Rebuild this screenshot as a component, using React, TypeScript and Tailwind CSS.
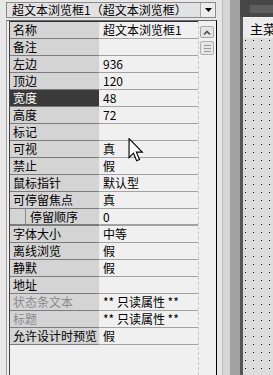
import React from 'react';

type Row = { n: string; v: string; gray?: boolean; sel?: boolean; sub?: boolean; thick?: boolean };

const rows: Row[] = [
  { n: '名称', v: '超文本浏览框1' },
  { n: '备注', v: '' },
  { n: '左边', v: '936' },
  { n: '顶边', v: '120' },
  { n: '宽度', v: '48', sel: true },
  { n: '高度', v: '72' },
  { n: '标记', v: '' },
  { n: '可视', v: '真' },
  { n: '禁止', v: '假' },
  { n: '鼠标指针', v: '默认型' },
  { n: '可停留焦点', v: '真' },
  { n: '停留顺序', v: '0', sub: true, thick: true },
  { n: '字体大小', v: '中等' },
  { n: '离线浏览', v: '假' },
  { n: '静默', v: '假' },
  { n: '地址', v: '' },
  { n: '状态条文本', v: '** 只读属性 **', gray: true },
  { n: '标题', v: '** 只读属性 **', gray: true },
  { n: '允许设计时预览', v: '假' },
];

function PropRow({ r }: { r: Row }) {
  const nameCls = r.sel
    ? 'bg-[#3a3a3a] text-white'
    : r.gray
    ? 'bg-[#d4d4d4] text-[#8a8a8a]'
    : 'bg-[#d4d4d4] text-black';
  const bb = r.thick ? 'border-b-2' : 'border-b';
  return (
    <div className="flex h-[17px]">
      <div
        className={`flex w-[90px] shrink-0 items-center whitespace-nowrap border-r border-r-[#ececec] ${bb} border-b-[#7c7c7c] ${nameCls} ${
          r.sub ? 'pl-[15px]' : 'pl-[3px]'
        }`}
      >
        {r.sub ? (
          <div className="flex h-full items-center border-l border-l-[#8a8a8a] pl-[4px]">{r.n}</div>
        ) : (
          r.n
        )}
      </div>
      <div className={`flex min-w-0 flex-1 items-center whitespace-nowrap ${bb} border-b-[#a2a2a2] bg-[#f0f0f0] pl-[3px]`}>{r.v}</div>
    </div>
  );
}

export default function App() {
  return (
    <div className="relative flex h-[375px] w-[273px] overflow-hidden bg-[#e8e8e8] font-['Noto_Sans_CJK_SC','Noto_Sans',sans-serif] text-[12px] leading-none text-black">
      {/* left property panel */}
      <div className="flex w-[217px] shrink-0 flex-col">
        <div className="ml-[6px] mr-[1px] mt-[2px] flex h-[16px] border border-[#8a8a8a] bg-[#e2e2e2]">
          <div className="flex flex-1 items-center whitespace-nowrap pl-[5px]">超文本浏览框1（超文本浏览框）</div>
          <div className="flex w-[15px] shrink-0 items-center justify-center border-l border-[#a8a8a8] bg-[#ececec]">
            <svg width="7" height="4" viewBox="0 0 7 4">
              <path d="M0 0 H7 L3.5 4 Z" fill="#000" />
            </svg>
          </div>
        </div>
        <div className="ml-[6px] mt-[2px] flex flex-1 border-l border-r border-t border-l-[#9a9a9a] border-r-black border-t-[#6a6a6a] bg-[#f0f0f0]">
          <div className="ml-[2px] flex w-[189px] shrink-0 flex-col border-l border-t border-l-[#404040] border-t-[#303030]">
            {rows.map((r) => (
              <PropRow key={r.n} r={r} />
            ))}
          </div>
          <div className="flex flex-1 flex-col border-l border-dashed border-l-[#c4c4c4] pl-[1px] pt-[5px]">
            <div className="flex h-[12px] w-[14px] items-center justify-center rounded-[2px] border border-[#a8a8a8] bg-[#e4e4e4]">
              <svg width="8" height="5" viewBox="0 0 8 5">
                <path d="M1 4.5 L4 1.5 L7 4.5" fill="none" stroke="#505050" strokeWidth="1.6" />
              </svg>
            </div>
            <div className="mt-[3px] flex h-[14px] w-[14px] flex-col items-center justify-center gap-[2px] rounded-[2px] border border-[#b0b0b0] bg-[#e6e6e6]">
              <div className="h-px w-[7px] bg-[#9a9a9a]" />
              <div className="h-px w-[7px] bg-[#9a9a9a]" />
              <div className="h-px w-[7px] bg-[#9a9a9a]" />
            </div>
          </div>
        </div>
      </div>

      {/* splitter strips */}
      <div className="w-[5px] shrink-0 bg-[#e6e6e6]" />
      <div className="w-px shrink-0 bg-[#bcbcbc]" />
      <div className="w-[7px] shrink-0 bg-[#d6d6d6]" />
      <div className="w-[10px] shrink-0 bg-[#a2a2a2]" />

      {/* designer canvas */}
      <div className="flex min-w-0 flex-1 flex-col overflow-hidden">
        <div className="flex h-[17px] shrink-0 items-center bg-[#474747] pl-[10px]">
          <div className="h-[8px] w-full bg-[#5e5e5e]" />
        </div>
        <div className="flex flex-1">
          <div className="w-[3px] shrink-0 bg-[#555555]" />
          <div className="flex min-w-0 flex-1 flex-col overflow-hidden">
            <div className="flex h-[21px] shrink-0 items-center border-t border-t-[#f4f4f4] bg-[#ebebeb] pl-[7px] text-[13px] whitespace-nowrap">
              主菜单
            </div>
            <div className="flex-1 bg-[#dcdcdc] [background-image:radial-gradient(circle_at_2.5px_2.5px,#000_0.7px,transparent_0.9px)] [background-size:8px_8px]" />
          </div>
        </div>
      </div>

      {/* mouse cursor */}
      <svg
        className="absolute left-[128px] top-[138px]"
        width="16"
        height="24"
        viewBox="0 0 12 19"
      >
        <path
          d="M0.5 0.5 L0.5 15.5 L4 12 L6.5 18 L8.8 17 L6.3 11.2 L11 11.2 Z"
          fill="#fff"
          stroke="#000"
          strokeWidth="0.9"
          strokeLinejoin="miter"
        />
      </svg>
    </div>
  );
}
